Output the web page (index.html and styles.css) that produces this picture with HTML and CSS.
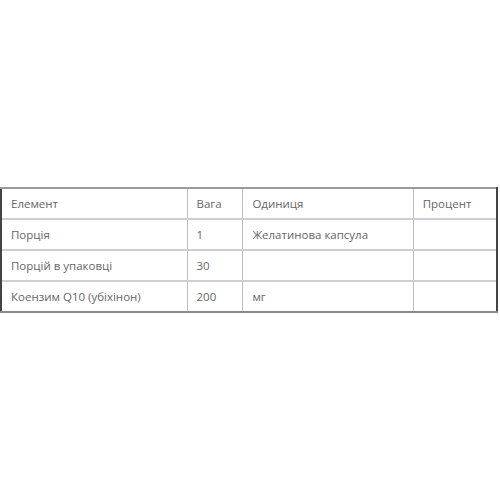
FILE: index.html
```html
<!DOCTYPE html>
<html>
<head>
<meta charset="utf-8">
<link rel="stylesheet" href="styles.css">
</head>
<body>
<div class="wrap">
<table class="nutri">
<tr><td class="c1">Елемент</td><td class="c2">Вага</td><td class="c3">Одиниця</td><td class="c4">Процент</td></tr>
<tr><td>Порція</td><td>1</td><td>Желатинова капсула</td><td></td></tr>
<tr><td>Порцій в упаковці</td><td>30</td><td></td><td></td></tr>
<tr><td>Коензим Q10 (убіхінон)</td><td>200</td><td>мг</td><td></td></tr>
</table>
</div>
</body>
</html>
```
FILE: styles.css
```css
html, body { margin: 0; padding: 0; background: #fff; }
.wrap { padding-top: 187px; }
.nutri {
  border-collapse: collapse;
  width: 498px;
  font-family: "Open Sans", sans-serif;
  font-size: 11.5px;
  color: #666;
  border-top: 2px solid #9a9a9a;
  border-bottom: 2px solid #8a8a8a;
  border-left: 2px solid #444;
  border-right: 2px solid #444;
}
.nutri td {
  height: 31px;
  box-sizing: border-box;
  padding: 0 0 0 9px;
  border: 1px solid #bdbdbd;
  border-top: 2px solid #cfcfcf;
  vertical-align: middle;
  text-align: left;
}
.nutri tr:first-child td { border-top: 2px solid #9a9a9a; }
.nutri td:first-child { border-left: 2px solid #444; padding-left: 9px; }
.nutri td:last-child { border-right: 2px solid #444; }
.nutri tr:last-child td { border-bottom: 2px solid #8a8a8a; }
.nutri .c1 { width: 187px; }
.nutri .c2 { width: 56px; }
.nutri .c3 { width: 171px; }
.nutri .c4 { width: 84px; }
```
